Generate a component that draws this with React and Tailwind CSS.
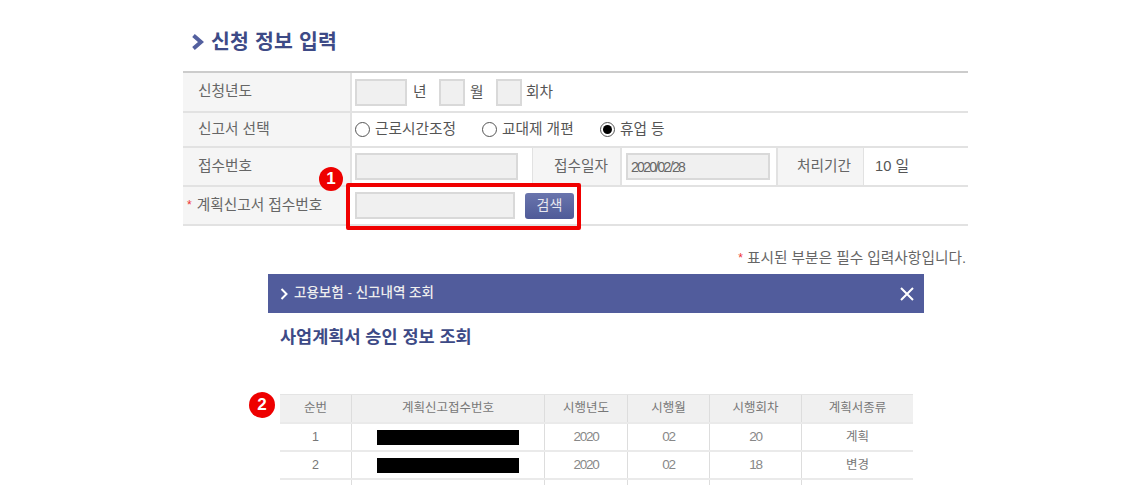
import React from "react";

const font = "font-['Liberation_Sans','Noto_Sans_CJK_KR',sans-serif]";
const inputClass = "h-[27px] bg-[#f0f0f0] border-2 border-[#d9d9d9] outline-none";
const labelClass = "bg-[#f5f5f5] flex items-center text-[14.7px] text-[#666] pb-[1px]";

const Radio = ({ checked, label, className }) => (
  <div className={`flex items-center gap-[5px] ${className}`}>
    <span className="w-[15px] h-[15px] rounded-full border border-[#555] bg-white flex items-center justify-center">
      {checked && <span className="w-[9px] h-[9px] rounded-full bg-black" />}
    </span>
    <span>{label}</span>
  </div>
);

const Badge = ({ n, className }) => (
  <div className={`absolute rounded-full bg-[#ee0000] text-white font-bold text-[17px] flex items-center justify-center ${className}`}>
    {n}
  </div>
);

const columns = ["w-[72px]", "w-[193px]", "w-[83px]", "w-[82px]", "w-[92px]", "w-[111px]"];
const headers = ["순번", "계획신고접수번호", "시행년도", "시행월", "시행회차", "계획서종류"];
const rows = [
  ["1", null, "2020", "02", "20", "계획"],
  ["2", null, "2020", "02", "18", "변경"],
];

const ResultRow = ({ cells, className }) => (
  <div className={`flex ${className}`}>
    {cells.map((cell, i) => (
      <div
        key={i}
        className={`${columns[i]} h-full flex items-center justify-center ${i < 5 ? "border-r border-[#ddd]" : ""} ${/^\d{2,}$/.test(cell) ? "tracking-[-1.2px] text-[13.5px] text-[#888]" : ""}`}
      >
        {cell === null ? <div className="w-[142px] h-[15px] bg-black" /> : cell}
      </div>
    ))}
  </div>
);

export default function App() {
  return (
    <div className={`relative w-[1147px] h-[501px] overflow-hidden bg-white ${font}`}>
      {/* Top form */}
      <div className="ml-[183px] w-[785px] pt-[28px]">
        <div className="flex items-center h-[28px] pl-[9px] gap-[7px]">
          <svg width="12" height="16" viewBox="0 0 12 16">
            <path d="M1.5 1.5 L9 8 L1.5 14.5" fill="none" stroke="#53609f" strokeWidth="4" />
          </svg>
          <h1 className="text-[20.5px] font-bold text-[#3d4a86] tracking-[0.2px]">신청 정보 입력</h1>
        </div>

        <div className="mt-[15px] border-t-2 border-[#ccc] text-[14.7px] text-[#555]">
          <div className="flex h-[40px] border-b-2 border-[#e2e2e2]">
            <div className={`${labelClass} w-[167px] pl-[15px]`}>신청년도</div>
            <div className="flex items-center pl-[3px] border-l-2 border-[#e2e2e2]">
              <input className={`${inputClass} w-[52px]`} readOnly />
              <span className="ml-[6px] w-[26px]">년</span>
              <input className={`${inputClass} w-[26px]`} readOnly />
              <span className="ml-[5px] w-[26px]">월</span>
              <input className={`${inputClass} w-[26px]`} readOnly />
              <span className="ml-[4px]">회차</span>
            </div>
          </div>

          <div className="flex h-[35px] border-b-2 border-[#e2e2e2]">
            <div className={`${labelClass} w-[167px] pl-[15px]`}>신고서 선택</div>
            <div className="flex items-center pl-[3px] border-l-2 border-[#e2e2e2]">
              <Radio label="근로시간조정" className="w-[127px]" />
              <Radio label="교대제 개편" className="w-[118px]" />
              <Radio label="휴업 등" checked />
            </div>
          </div>

          <div className="flex h-[39px] border-b-2 border-[#e2e2e2]">
            <div className={`${labelClass} w-[167px] pl-[15px]`}>접수번호</div>
            <div className="flex items-center pl-[3px] border-l-2 border-[#e2e2e2] w-[182px] shrink-0">
              <input className={`${inputClass} w-[163px]`} readOnly />
            </div>
            <div className={`${labelClass} w-[88px] justify-end pr-[12px] border-l border-[#e2e2e2]`}>접수일자</div>
            <div className="flex items-center pl-[4px] w-[156px] border-l-2 border-[#e2e2e2]">
              <input
                className={`${inputClass} w-[144px] border-[#ccc] px-[3px] text-[14px] text-[#666] tracking-[-1.7px]`}
                value="2020/02/28"
                readOnly
              />
            </div>
            <div className={`${labelClass} w-[87px] justify-end pr-[12px] border-l-2 border-[#e2e2e2]`}>처리기간</div>
            <div className="flex items-center pl-[11px] border-l border-[#e2e2e2]">10 일</div>
          </div>

          <div className="flex h-[39px] border-b-2 border-[#e2e2e2]">
            <div className={`${labelClass} w-[167px] pl-[4px] gap-[5px]`}>
              <span className="text-[#e33] text-[12px]">*</span>
              <span>계획신고서 접수번호</span>
            </div>
            <div className="flex items-center pl-[5px] gap-[10px]">
              <input className={`${inputClass} w-[160px]`} readOnly />
              <button className="w-[49px] h-[26px] rounded-[3px] bg-gradient-to-b from-[#6a75ad] to-[#4f5b98] text-[#e8e8f0] text-[14px]">
                검색
              </button>
            </div>
          </div>
        </div>

        <div className="mt-[23px] h-[18px] pr-[2px] flex items-center justify-end text-[14.7px] text-[#666] gap-[4px]">
          <span className="text-[#e33] text-[12px]">*</span>
          <span>표시된 부분은 필수 입력사항입니다.</span>
        </div>
      </div>

      {/* Popup */}
      <div className="ml-[268px] w-[656px] mt-[7px]">
        <div className="h-[39px] bg-[#515c9c] flex items-center justify-between pl-[12px] pr-[9px] text-white">
          <div className="flex items-center gap-[6px]">
            <svg width="8" height="12" viewBox="0 0 8 12">
              <path d="M1.5 1 L6.5 6 L1.5 11" fill="none" stroke="white" strokeWidth="2" />
            </svg>
            <span className="text-[13.5px] font-medium text-[#eee]">고용보험 - 신고내역 조회</span>
          </div>
          <svg width="16" height="16" viewBox="0 0 16 16">
            <path d="M2 2 L14 14 M14 2 L2 14" stroke="white" strokeWidth="2" />
          </svg>
        </div>
        <h2 className="ml-[12px] mt-[12px] h-[24px] flex items-center text-[17.5px] font-bold text-[#3d4a86]">
          사업계획서 승인 정보 조회
        </h2>

        <div className="ml-[12px] mt-[45px] w-[633px] text-[#777] text-[12.5px]">
          <ResultRow cells={headers} className="h-[30px] bg-[#f0f0f0] border-t border-t-[#e4e4e4] border-b-2 border-b-[#eaeaea]" />
          {rows.map((row) => (
            <ResultRow key={row[0]} cells={row} className="h-[28px] border-b-2 border-b-[#eaeaea]" />
          ))}
          <ResultRow cells={["", "", "", "", "", ""]} className="h-[5px]" />
        </div>
      </div>

      {/* Annotations */}
      <div className="absolute left-[346px] top-[183px] w-[235px] h-[47px] border-[4px] border-[#f00000] rounded-[2px]" />
      <Badge n="1" className="left-[319px] top-[167px] w-[24px] h-[24px]" />
      <Badge n="2" className="left-[249px] top-[392px] w-[26px] h-[26px]" />
    </div>
  );
}
